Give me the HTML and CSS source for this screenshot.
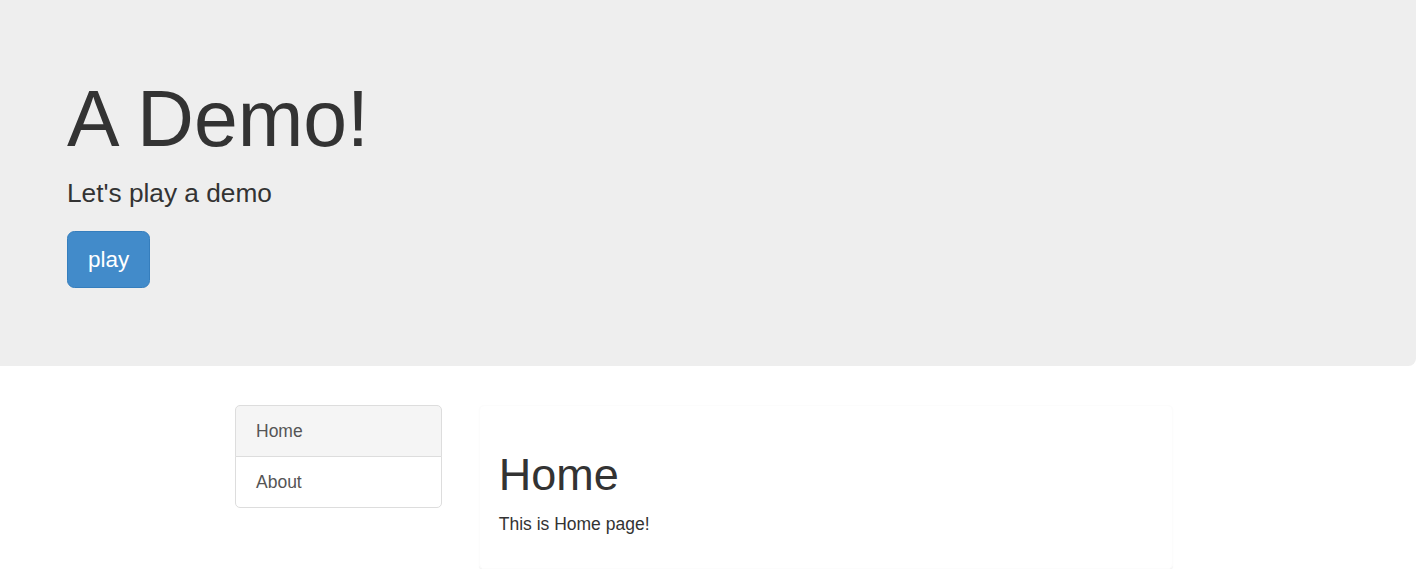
FILE: index.html
```html
<!DOCTYPE html>
<html>
<head>
    <meta charset="UTF-8">
    <title>A Demo!</title>
    <link rel="stylesheet" href="styles.css">
</head>
<body>
    <div class="jumbotron">
        <h1>A Demo!</h1>
        <p>Let's play a demo</p>
        <p><a class="btn" href="#">play</a></p>
    </div>
    <div class="main">
        <div class="list-group">
            <a class="item on" href="#">Home</a>
            <a class="item" href="#">About</a>
        </div>
        <div class="panel">
            <h1>Home</h1>
            <p>This is Home page!</p>
        </div>
    </div>
</body>
</html>
```

FILE: styles.css
```css
* { margin: 0; padding: 0; box-sizing: border-box; }
body {
    font-family: "Liberation Sans", Arial, sans-serif;
    font-size: 17.5px;
    line-height: 25px;
    color: #333;
    background: #fff;
}
a { text-decoration: none; }

.jumbotron {
    margin-right: 5px;
    padding: 51px 67px 59px;
    background: #eee;
    border-bottom-right-radius: 7.5px;
}
.jumbotron h1 {
    margin: 25px 0 12.5px;
    font-size: 78.75px;
    line-height: 86.6px;
    font-weight: normal;
}
.jumbotron p {
    margin-bottom: 18.75px;
    font-size: 26.25px;
    line-height: 37.5px;
}
.btn {
    display: inline-block;
    padding: 12.5px 20px;
    font-size: 22.5px;
    line-height: 30px;
    color: #fff;
    background: #428bca;
    border: 1.25px solid #357ebd;
    border-radius: 7.5px;
    vertical-align: top;
}

.main {
    display: flex;
    align-items: flex-start;
    gap: 37px;
    margin: 39px 0 0 235px;
}
.list-group {
    display: flex;
    flex-direction: column;
    width: 207px;
}
.list-group .item {
    display: block;
    padding: 13px 20px 12px;
    color: #555;
    background: #fff;
    border: 1px solid #ddd;
}
.list-group .item + .item { margin-top: -1px; }
.list-group .item:first-child { border-radius: 5px 5px 0 0; }
.list-group .item:last-child { border-radius: 0 0 5px 5px; }
.list-group .item.on { background: #f5f5f5; }

.panel {
    width: 694px;
    padding: 18.75px;
    border: 1.25px solid #fcfcfc;
    border-radius: 5px;
    box-shadow: 0 1.25px 1.25px rgba(0, 0, 0, .05);
}
.panel h1 {
    margin: 25px 0 12.5px;
    font-size: 45px;
    line-height: 49.5px;
    font-weight: normal;
}
.panel p { margin-bottom: 12.5px; }
```
